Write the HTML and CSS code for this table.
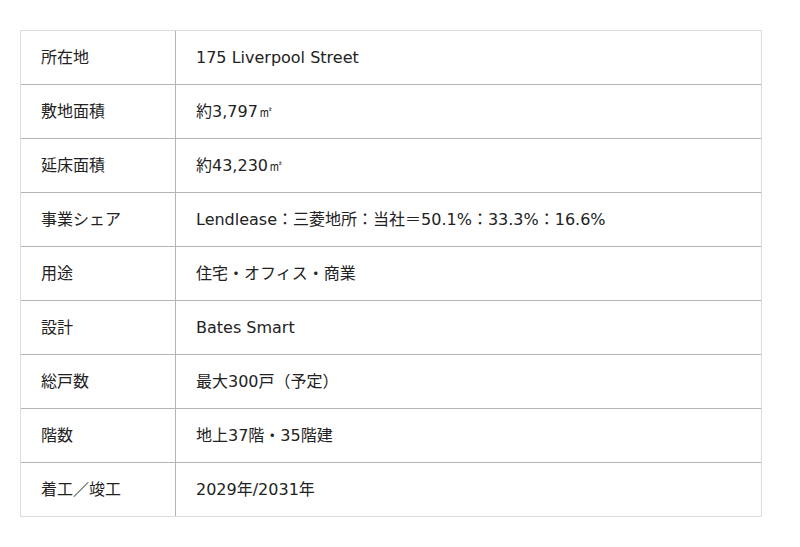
FILE: index.html
```html
<!DOCTYPE html>
<html lang="ja">
<head>
<meta charset="utf-8">
<title>概要</title>
<link rel="stylesheet" href="styles.css">
</head>
<body>
<div class="spec">
  <div class="label">所在地</div><div class="value">175 Liverpool Street</div>
  <div class="label">敷地面積</div><div class="value">約3,797<span class="unit" lang="en">㎡</span></div>
  <div class="label">延床面積</div><div class="value">約43,230<span class="unit" lang="en">㎡</span></div>
  <div class="label">事業シェア</div><div class="value">Lendlease：三菱地所：当社＝50.1%：33.3%：16.6%</div>
  <div class="label">用途</div><div class="value">住宅・オフィス・商業</div>
  <div class="label">設計</div><div class="value">Bates Smart</div>
  <div class="label">総戸数</div><div class="value">最大300戸（予定）</div>
  <div class="label">階数</div><div class="value">地上37階・35階建</div>
  <div class="label last">着工／竣工</div><div class="value last">2029年/2031年</div>
</div>
</body>
</html>
```

FILE: styles.css
```css
html, body {
  margin: 0;
  padding: 0;
  background: #ffffff;
}
body {
  padding: 30px 20px;
  font-family: "DejaVu Sans", "Noto Sans CJK JP", sans-serif;
  font-size: 16px;
  color: #222222;
}
.spec {
  display: grid;
  grid-template-columns: 155px 1fr;
  width: 742px;
  box-sizing: border-box;
  border: 1px solid #dddddd;
}
.label, .value {
  height: 54px;
  box-sizing: border-box;
  border-bottom: 1px solid #b4b4b4;
  display: flex;
  align-items: center;
  padding: 0 20px;
  line-height: 24px;
}
.label {
  border-right: 1px solid #b4b4b4;
}
.unit {
  font-family: "DejaVu Sans", sans-serif;
}
.label.last, .value.last {
  border-bottom: none;
  height: 53px;
}
```
